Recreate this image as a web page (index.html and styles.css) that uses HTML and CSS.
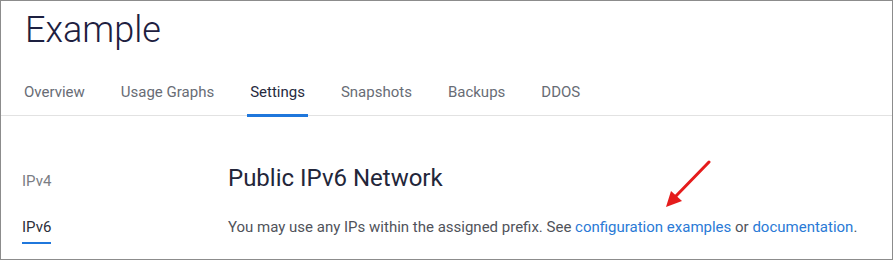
FILE: index.html
```html
<!DOCTYPE html>
<html lang="en">

<head>
    <meta charset="UTF-8">
    <title>Example - Settings</title>
    <link rel="stylesheet" href="styles.css">
</head>

<body>
    <div class="page">
        <div class="head">
            <h1>Example</h1>
        </div>
        <ul class="tabs">
            <li>Overview</li>
            <li>Usage Graphs</li>
            <li class="on">Settings</li>
            <li>Snapshots</li>
            <li>Backups</li>
            <li>DDOS</li>
        </ul>
        <div class="body">
            <ul class="side">
                <li>IPv4</li>
                <li class="on">IPv6</li>
            </ul>
            <div class="main">
                <h2>Public IPv6 Network</h2>
                <p>You may use any IPs within the assigned prefix. See <a href="#">configuration examples</a> or <a href="#">documentation</a>.</p>
            </div>
        </div>
        <!-- annotation arrow -->
        <svg class="arrow" width="60" height="60" viewBox="0 0 60 60">
            <line x1="54" y1="2" x2="20" y2="37" stroke="#e51c1c" stroke-width="3" stroke-linecap="round" />
            <polygon points="11,47 16,31 27,41" fill="#e51c1c" />
        </svg>
    </div>
</body>

</html>
```

FILE: styles.css
```css
body {
    margin: 0px;
    font-family: Roboto, "Liberation Sans", sans-serif;
}

.page {
    position: relative;
    width: 893px;
    height: 260px;
    box-sizing: border-box;
    border: 1px solid #8c8c8c;
    background-color: #fff;
    overflow: hidden;
}

.head {
    padding: 8px 0px 0px 24px;
}

.head h1 {
    margin: 0px;
    font-size: 36px;
    line-height: 42px;
    font-weight: 300;
    color: #1d2040;
}

.tabs {
    display: flex;
    gap: 30px;
    margin: 31px 0px 0px;
    padding: 0px 0px 0px 20px;
    list-style: none;
    border-bottom: 1px solid #e2e2e2;
}

.tabs li {
    padding: 0px 3px 12px;
    margin-bottom: -2px;
    font-size: 15px;
    line-height: 20px;
    color: #686c75;
    border-bottom: 3px solid transparent;
}

.tabs li.on {
    color: #262a3e;
    border-bottom-color: #1f77dc;
}

.body {
    display: flex;
}

.side {
    width: 206px;
    margin: 0px;
    padding: 55px 0px 0px 21px;
    list-style: none;
}

.side li {
    width: max-content;
    height: 20px;
    margin-bottom: 26px;
    font-size: 15px;
    line-height: 20px;
    color: #7a7d84;
}

.side li.on {
    padding-bottom: 5px;
    border-bottom: 2px solid #1f77dc;
    color: #2c2f3a;
}

.main {
    padding-top: 48px;
}

.main h2 {
    margin: 0px;
    font-size: 24px;
    line-height: 28px;
    font-weight: 400;
    color: #23263a;
}

.main p {
    margin: 25px 0px 0px;
    font-size: 15px;
    line-height: 20px;
    color: #50535a;
}

.main a {
    color: #2a7ad6;
    text-decoration: none;
}

.arrow {
    position: absolute;
    left: 654px;
    top: 159px;
}
```
